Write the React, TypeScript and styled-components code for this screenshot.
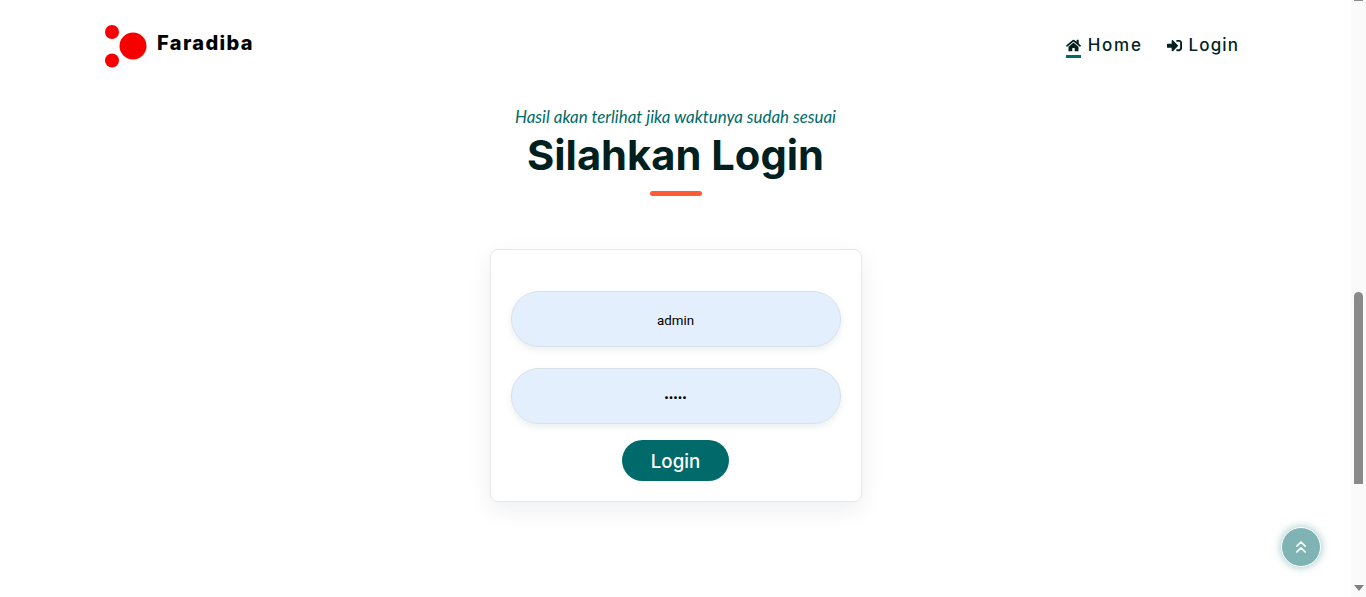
import React from "react";
import styled, { createGlobalStyle } from "styled-components";
import { FaHome, FaSignInAlt } from "react-icons/fa";
import { ChevronsUp } from "lucide-react";

const GlobalStyle = createGlobalStyle`
  html, body {
    margin: 0;
    padding: 0;
    height: 597px;
    overflow: hidden;
    background: #fff;
  }
  * {
    box-sizing: border-box;
  }
`;

const Page = styled.div`
  display: flex;
  width: 1366px;
  height: 597px;
  overflow: hidden;
  font-family: "Inter", "Liberation Sans", sans-serif;
`;

const Main = styled.div`
  flex: 1;
  min-width: 0;
  display: flex;
  flex-direction: column;
`;

const Header = styled.header`
  display: flex;
  justify-content: space-between;
  align-items: flex-start;
  height: 100px;
  padding: 25px 112px 0 105px;
`;

const Brand = styled.div`
  display: flex;
  align-items: center;
  gap: 10px;
`;

const BrandName = styled.span`
  font-size: 20px;
  font-weight: 800;
  letter-spacing: 1.35px;
  color: #000;
  margin-top: -8px;
`;

const Nav = styled.nav`
  display: flex;
  gap: 24px;
  padding-top: 9px;
`;

const NavLink = styled.a`
  display: flex;
  align-items: center;
  gap: 7px;
  font-size: 17px;
  font-weight: 500;
  line-height: 19px;
  color: #001f1f;
`;

const NavLabel = styled.span<{ $spacing: number }>`
  margin-top: -2px;
  letter-spacing: ${(props) => props.$spacing}px;
`;

const NavIcon = styled.span<{ $active?: boolean }>`
  display: flex;
  width: 15px;
  height: 24px;
  padding-top: 4px;
  font-size: 15px;
  border-bottom: 3px solid ${(props) => (props.$active ? "#006a6a" : "transparent")};
`;

const Content = styled.main`
  display: flex;
  flex-direction: column;
  align-items: center;
`;

const Tagline = styled.p`
  margin: 5px 0 0;
  font-family: "Lato", sans-serif;
  font-style: italic;
  font-size: 16.9px;
  line-height: 24px;
  color: #006a6a;
`;

const Title = styled.h1`
  margin: 1px 0 0;
  font-size: 41.7px;
  font-weight: 700;
  line-height: 50px;
  color: #001f1f;
`;

const TitleRule = styled.div`
  width: 52px;
  height: 5px;
  margin-top: 11px;
  border-radius: 3px;
  background: #ff5b35;
`;

const Card = styled.form`
  display: flex;
  flex-direction: column;
  align-items: center;
  width: 372px;
  height: 253px;
  margin-top: 53px;
  padding: 41px 20px 0;
  background: #fff;
  border: 1px solid #e8e8ec;
  border-radius: 8px;
  box-shadow: 0 8px 24px rgba(20, 30, 60, 0.07);
`;

const Field = styled.input`
  width: 330px;
  height: 56px;
  margin-bottom: 21px;
  padding: 3px 0 0;
  background: #e3effd;
  border: 1px solid #dbe1e8;
  border-radius: 28px;
  box-shadow: 0 3px 7px rgba(0, 80, 80, 0.09);
  text-align: center;
  font-family: "Roboto", sans-serif;
  font-size: 13.33px;
  color: #000;
  outline: none;
`;

const SubmitButton = styled.button`
  width: 107px;
  height: 41px;
  margin-top: -5px;
  padding: 2px 0 0;
  background: #006a6a;
  border: none;
  border-radius: 21px;
  font-family: "Inter", sans-serif;
  font-size: 18.7px;
  font-weight: 500;
  color: #fff;
`;

const Scrollbar = styled.div`
  display: flex;
  flex-direction: column;
  align-items: center;
  width: 15px;
  height: 597px;
  background: #fafafa;
`;

const ThumbCap = styled.div`
  width: 9px;
  height: 1px;
  background: #8a8a8a;
`;

const Thumb = styled.div`
  width: 9px;
  height: 192px;
  margin-top: 291px;
  border-radius: 5px 5px 0 0;
  background: #8a8a8a;
`;

const ArrowDown = styled.div`
  width: 0;
  height: 0;
  margin-top: 101px;
  border-left: 5px solid transparent;
  border-right: 5px solid transparent;
  border-top: 6px solid #808080;
`;

const BackToTop = styled.a`
  position: fixed;
  left: 1281px;
  top: 527px;
  display: flex;
  align-items: center;
  justify-content: center;
  width: 40px;
  height: 40px;
  border: 1px solid #fff;
  border-radius: 50%;
  background: #80b4b4;
  box-shadow: 0 0 9px rgba(0, 106, 106, 0.4);
  color: #fff;
`;

const Logo = () => (
  <svg width="42" height="44" viewBox="0 0 42 44" aria-hidden="true">
    <circle cx="7" cy="7" r="7" fill="#f60000" />
    <circle cx="28" cy="21" r="13.5" fill="#f60000" />
    <circle cx="7" cy="35.5" r="7" fill="#f60000" />
  </svg>
);

export default function App() {
  return (
    <Page>
      <GlobalStyle />
      <Main>
        <Header>
          <Brand>
            <Logo />
            <BrandName>Faradiba</BrandName>
          </Brand>
          <Nav>
            <NavLink>
              <NavIcon $active>
                <FaHome />
              </NavIcon>
              <NavLabel $spacing={1.7}>Home</NavLabel>
            </NavLink>
            <NavLink>
              <NavIcon>
                <FaSignInAlt />
              </NavIcon>
              <NavLabel $spacing={1.1}>Login</NavLabel>
            </NavLink>
          </Nav>
        </Header>
        <Content>
          <Tagline>Hasil akan terlihat jika waktunya sudah sesuai</Tagline>
          <Title>Silahkan Login</Title>
          <TitleRule />
          <Card onSubmit={(e) => e.preventDefault()}>
            <Field type="text" defaultValue="admin" />
            <Field type="password" defaultValue="admin" />
            <SubmitButton>Login</SubmitButton>
          </Card>
        </Content>
      </Main>
      <Scrollbar>
        <ThumbCap />
        <Thumb />
        <ArrowDown />
      </Scrollbar>
      <BackToTop>
        <ChevronsUp size={20} strokeWidth={2} />
      </BackToTop>
    </Page>
  );
}
